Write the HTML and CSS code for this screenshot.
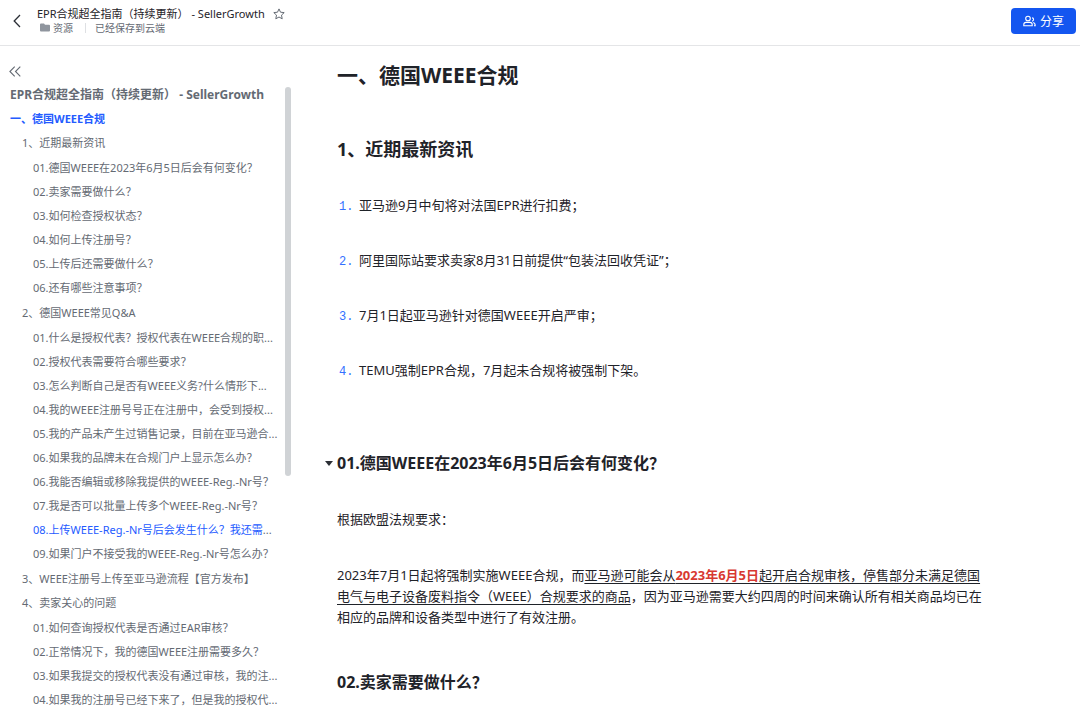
FILE: index.html
```html
<!DOCTYPE html>
<html lang="zh-CN">
<head>
    <meta charset="UTF-8">
    <meta name="viewport" content="width=device-width, initial-scale=1.0">
    <title>EPR合规超全指南（持续更新） - SellerGrowth</title>
    <link rel="stylesheet" href="styles.css">
</head>
<body>
    <header class="topbar">
        <button type="button" class="icon-btn back-btn" aria-label="返回">
            <svg width="8" height="14" viewBox="0 0 8 14"><path d="M7 1 1.200 7 7 13" fill="none" stroke="currentColor" stroke-width="1.300"/></svg>
        </button>
        <div class="doc-info">
            <div class="doc-title">
                <span>EPR合规超全指南（持续更新） - SellerGrowth</span>
                <button type="button" class="icon-btn star-btn" aria-label="收藏">
                    <svg width="12" height="12" viewBox="0 0 12 12"><path d="M6 .9 7.500 4.200 11.200 4.600 8.500 7.100 9.200 10.800 6 9 2.800 10.800 3.500 7.100.8 4.600 4.500 4.200Z" fill="none" stroke="currentColor" stroke-linejoin="round"/></svg>
                </button>
            </div>
            <div class="doc-meta">
                <a href="#" class="folder">
                    <svg width="10" height="9" viewBox="0 0 10 9"><path d="M1 .5h3l1 1.200h4a1 1 0 0 1 1 1V7.500a1 1 0 0 1-1 1H1a1 1 0 0 1-1-1v-6a1 1 0 0 1 1-1Z" fill="#8f959e"/></svg>
                    <span>资源</span>
                </a>
                <span class="divider"></span>
                <span>已经保存到云端</span>
            </div>
        </div>
        <button type="button" class="share-btn">
            <svg width="13" height="12" viewBox="0 0 13 12" fill="none" stroke="currentColor" stroke-width="1.100"><circle cx="5" cy="3.500" r="2.300"/><path d="M.8 10.800V9.600Q.8 7.400 3 7.400H7Q9.200 7.400 9.200 9.600V10.800Z"/><path d="M9 2.900a1.600 1.600 0 0 1 0 3.200M10.200 7.500Q12.200 7.900 12.200 10.800H11"/></svg>
            <span>分享</span>
        </button>
    </header>

    <div class="layout">
        <aside class="sidebar">
            <button type="button" class="icon-btn collapse-btn" aria-label="收起目录">
                <svg width="12" height="11" viewBox="0 0 12 11"><path d="M5.700.6.900 5.500 5.700 10.400M11.300.6 6.500 5.500 11.300 10.400" fill="none" stroke="currentColor" stroke-width="1.100"/></svg>
            </button>
            <div class="toc-wrap">
                <nav class="toc" aria-label="目录">
                    <a href="#" class="toc-title">EPR合规超全指南（持续更新） - SellerGrowth</a>
                    <a href="#weee" class="toc-h1">一、德国WEEE合规</a>
                    <a href="#news" class="toc-h2">1、近期最新资讯</a>
                    <div class="toc-group">
                        <a href="#q1">01.德国WEEE在2023年6月5日后会有何变化？</a>
                        <a href="#q2">02.卖家需要做什么？</a>
                        <a href="#">03.如何检查授权状态？</a>
                        <a href="#">04.如何上传注册号？</a>
                        <a href="#">05.上传后还需要做什么？</a>
                        <a href="#">06.还有哪些注意事项？</a>
                    </div>
                    <a href="#" class="toc-h2">2、德国WEEE常见Q&amp;A</a>
                    <div class="toc-group">
                        <a href="#">01.什么是授权代表？授权代表在WEEE合规的职...</a>
                        <a href="#">02.授权代表需要符合哪些要求？</a>
                        <a href="#">03.怎么判断自己是否有WEEE义务?什么情形下...</a>
                        <a href="#">04.我的WEEE注册号号正在注册中，会受到授权...</a>
                        <a href="#">05.我的产品未产生过销售记录，目前在亚马逊合...</a>
                        <a href="#">06.如果我的品牌未在合规门户上显示怎么办？</a>
                        <a href="#">06.我能否编辑或移除我提供的WEEE-Reg.-Nr号？</a>
                        <a href="#">07.我是否可以批量上传多个WEEE-Reg.-Nr号？</a>
                        <a href="#" class="active">08.上传WEEE-Reg.-Nr号后会发生什么？我还需<span class="more">...</span></a>
                        <a href="#">09.如果门户不接受我的WEEE-Reg.-Nr号怎么办？</a>
                    </div>
                    <a href="#" class="toc-h2">3、WEEE注册号上传至亚马逊流程【官方发布】</a>
                    <a href="#" class="toc-h2">4、卖家关心的问题</a>
                    <div class="toc-group">
                        <a href="#">01.如何查询授权代表是否通过EAR审核？</a>
                        <a href="#">02.正常情况下，我的德国WEEE注册需要多久？</a>
                        <a href="#">03.如果我提交的授权代表没有通过审核，我的注...</a>
                        <a href="#">04.如果我的注册号已经下来了，但是我的授权代...</a>
                    </div>
                </nav>
                <div class="scroll-track"><div class="scroll-thumb"></div></div>
            </div>
        </aside>

        <main class="content">
            <article class="doc">
                <h1 id="weee">一、德国WEEE合规</h1>
                <h2 id="news">1、近期最新资讯</h2>
                <ol class="news">
                    <li><span class="num">1.</span><span>亚马逊9月中旬将对法国EPR进行扣费；</span></li>
                    <li><span class="num">2.</span><span>阿里国际站要求卖家8月31日前提供“包装法回收凭证”；</span></li>
                    <li><span class="num">3.</span><span>7月1日起亚马逊针对德国WEEE开启严审；</span></li>
                    <li><span class="num">4.</span><span>TEMU强制EPR合规，7月起未合规将被强制下架。</span></li>
                </ol>
                <div class="question">
                    <button type="button" class="icon-btn caret-btn" aria-label="折叠">
                        <svg width="8" height="5" viewBox="0 0 8 5"><path d="M0 0h8L4 5Z" fill="currentColor"/></svg>
                    </button>
                    <h3 id="q1">01.德国WEEE在2023年6月5日后会有何变化？</h3>
                </div>
                <p>根据欧盟法规要求：</p>
                <p>2023年7月1日起将强制实施WEEE合规，而<u>亚马逊可能会从<strong>2023年6月5日</strong>起开启合规审核，停售部分未满足德国电气与电子设备废料指令（WEEE）合规要求的商品</u>，因为亚马逊需要大约四周的时间来确认所有相关商品均已在相应的品牌和设备类型中进行了有效注册。</p>
                <h3 id="q2" class="next">02.卖家需要做什么？</h3>
            </article>
        </main>
    </div>
</body>
</html>
```
FILE: styles.css
```css
* {
    box-sizing: border-box;
}

body {
    margin: 0;
    height: 100vh;
    display: flex;
    flex-direction: column;
    overflow: hidden;
    background-color: #fff;
    color: #1f2329;
    font-family: "Noto Sans", "Noto Sans CJK SC", sans-serif;
    font-size: 13px;
    line-height: 21px;
}

a {
    color: inherit;
    text-decoration: none;
}

button {
    font-family: inherit;
    cursor: pointer;
}

svg {
    display: block;
    flex: none;
}

.icon-btn {
    display: flex;
    padding: 0;
    border: none;
    background: none;
    color: #646a73;
}

/* top bar */
.topbar {
    flex: none;
    display: flex;
    align-items: center;
    height: 46px;
    padding: 0 4px 4px 13px;
    border-bottom: 1px solid #e4e5e7;
}

.back-btn {
    color: #2b2f36;
}

.doc-info {
    flex: 1;
    margin-left: 16px;
    font-size: 11px;
    line-height: 14px;
}

.doc-title,
.doc-meta,
.folder {
    display: flex;
    align-items: center;
}

.doc-title {
    gap: 8px;
}

.doc-meta {
    padding-left: 3px;
    font-size: 10px;
    color: #646a73;
}

.folder {
    gap: 3px;
}

.divider {
    width: 1px;
    height: 10px;
    margin: 0 9px 0 12px;
    background-color: #dee0e3;
}

.share-btn {
    display: flex;
    align-items: center;
    gap: 4px;
    height: 26px;
    padding: 0 12px;
    border: none;
    border-radius: 4px;
    background-color: #1456f0;
    color: #fff;
    font-size: 12px;
}

/* sidebar */
.layout {
    flex: 1;
    display: flex;
    min-height: 0;
}

.sidebar {
    flex: none;
    display: flex;
    flex-direction: column;
    width: 292px;
    padding-top: 20px;
}

.collapse-btn {
    margin-left: 9px;
}

.toc-wrap {
    flex: 1;
    display: flex;
    min-height: 0;
    padding-top: 6px;
}

.toc {
    flex: 1;
    min-width: 0;
    padding-left: 10px;
    overflow-y: auto;
    scrollbar-width: none;
    color: #646a73;
    font-size: 11px;
    line-height: 24px;
}

.toc a {
    display: block;
    white-space: nowrap;
}

.toc .toc-title {
    font-size: 12px;
    font-weight: bold;
}

.toc .toc-h1 {
    color: #245bff;
    font-weight: bold;
}

.toc .toc-h2 {
    padding-left: 12px;
}

.toc-group {
    padding: 1px 0 1px 23px;
}

.toc .active {
    color: #245bff;
}

.more {
    color: #646a73;
}

.scroll-track {
    flex: none;
    width: 7px;
    padding: 4px 1px 0 0;
}

.scroll-thumb {
    height: 62%;
    border-radius: 3px;
    background-color: #d0d3d6;
}

/* document */
.content {
    flex: 1;
    min-width: 0;
    padding: 15px 24px 24px 45px;
    overflow-y: auto;
    scrollbar-width: none;
}

.doc {
    max-width: 655px;
}

h1,
h2,
h3,
p {
    margin: 0;
}

h1 {
    font-size: 21px;
    line-height: 28px;
}

h2 {
    margin-top: 48px;
    font-size: 18px;
    line-height: 24px;
}

h3 {
    font-size: 16px;
    line-height: 22px;
}

.news {
    margin: 34px 0 0;
    padding: 0;
    list-style: none;
}

.news li {
    display: flex;
    align-items: baseline;
    margin-bottom: 32px;
}

.num {
    width: 22px;
    padding-left: 2px;
    color: #3370ff;
    font-family: "Liberation Mono", monospace;
    font-size: 12px;
}

.question {
    display: flex;
    align-items: center;
    margin: 69px 0 0 -12px;
}

.caret-btn {
    width: 12px;
    color: #2b2f36;
}

p {
    margin-top: 35px;
}

u {
    text-underline-offset: 3px;
}

strong {
    color: #d83931;
}

.next {
    margin-top: 43px;
}
```
